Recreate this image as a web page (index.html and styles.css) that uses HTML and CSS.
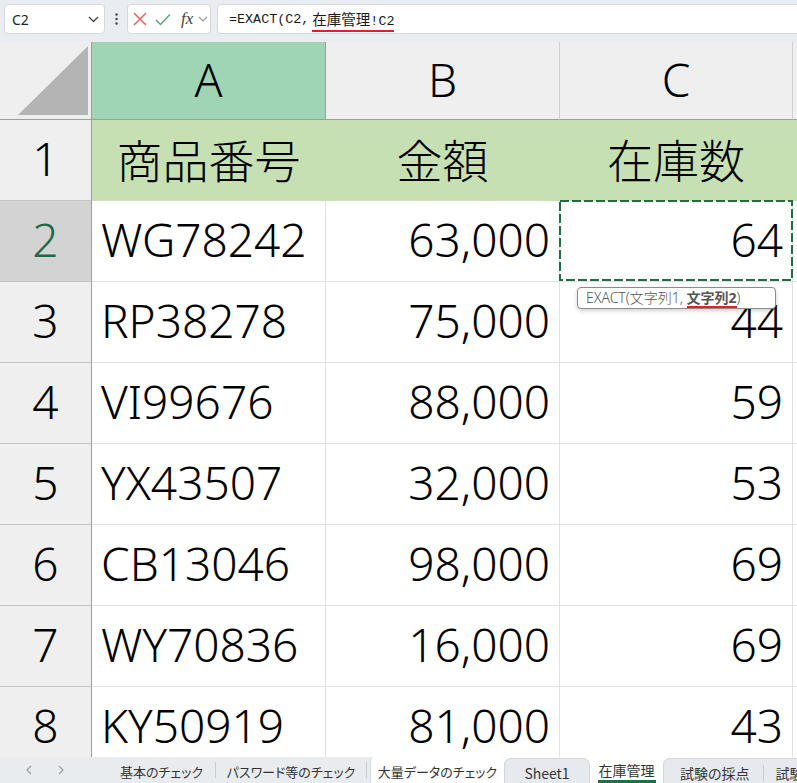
FILE: index.html
```html
<!DOCTYPE html>
<html lang="ja">
<head>
<meta charset="utf-8">
<title>在庫管理</title>
<link rel="stylesheet" href="styles.css">
</head>
<body>
<div class="app">
  <div class="fbar">
    <div class="namebox">
      <span>C2</span>
      <svg class="chev" width="11" height="7" viewBox="0 0 11 7"><path d="M1 1l4.5 4.5L10 1" fill="none" stroke="#444" stroke-width="1.3"/></svg>
    </div>
    <div class="dots">
      <svg width="3" height="12" viewBox="0 0 3 12"><circle cx="1.5" cy="1.5" r="1.2" fill="#444"/><circle cx="1.5" cy="6" r="1.2" fill="#444"/><circle cx="1.5" cy="10.5" r="1.2" fill="#444"/></svg>
    </div>
    <div class="fxbox">
      <svg class="ico-x" width="14" height="14" viewBox="0 0 14 14"><path d="M1 1l12 12M13 1L1 13" stroke="#e2625c" stroke-width="1.5" fill="none"/></svg>
      <svg class="ico-ok" width="16" height="13" viewBox="0 0 16 13"><path d="M1 7l4.5 4.5L15 1.5" stroke="#5aa872" stroke-width="1.5" fill="none"/></svg>
      <span class="fx">fx</span>
      <svg class="chev2" width="10" height="6" viewBox="0 0 10 6"><path d="M1 1l4 4 4-4" fill="none" stroke="#999" stroke-width="1.2"/></svg>
    </div>
    <div class="formula"><span class="flat">=EXACT(C2,</span><span class="fref"><span class="fk">在庫管理</span>!C2</span></div>
  </div>

  <div class="grid">
    <div class="corner"><svg width="91" height="77" viewBox="0 0 91 77"><path d="M18 73H88V4Z" fill="#b4b4b4"/></svg></div>
    <div class="ch hl">A</div>
    <div class="ch">B</div>
    <div class="ch">C</div>
    <div class="ch edge"></div>

    <div class="rh">1</div>
    <div class="c hd">商品番号</div>
    <div class="c hd">金額</div>
    <div class="c hd">在庫数</div>
    <div class="c hd edge"></div>

    <div class="rh sel">2</div>
    <div class="c l">WG78242</div>
    <div class="c r">63,000</div>
    <div class="c r active">64
      <svg class="marquee" width="234" height="81" viewBox="0 0 234 81"><rect x="1" y="1" width="232" height="79" fill="none" stroke="#1f6d42" stroke-width="2" stroke-dasharray="9 3"/></svg>
      <div class="tip">EXACT(文字列1, <b class="cur">文字列2</b>)</div>
    </div>
    <div class="c edge"></div>

    <div class="rh">3</div>
    <div class="c l">RP38278</div>
    <div class="c r">75,000</div>
    <div class="c r">44</div>
    <div class="c edge"></div>

    <div class="rh">4</div>
    <div class="c l">VI99676</div>
    <div class="c r">88,000</div>
    <div class="c r">59</div>
    <div class="c edge"></div>

    <div class="rh">5</div>
    <div class="c l">YX43507</div>
    <div class="c r">32,000</div>
    <div class="c r">53</div>
    <div class="c edge"></div>

    <div class="rh">6</div>
    <div class="c l">CB13046</div>
    <div class="c r">98,000</div>
    <div class="c r">69</div>
    <div class="c edge"></div>

    <div class="rh">7</div>
    <div class="c l">WY70836</div>
    <div class="c r">16,000</div>
    <div class="c r">69</div>
    <div class="c edge"></div>

    <div class="rh">8</div>
    <div class="c l">KY50919</div>
    <div class="c r">81,000</div>
    <div class="c r">43</div>
    <div class="c edge"></div>
  </div>

  <div class="tabs">
    <div class="nav">
      <svg width="6" height="10" viewBox="0 0 6 10"><path d="M5 1L1 5l4 4" fill="none" stroke="#9a9a9a" stroke-width="1.1"/></svg>
      <svg width="6" height="10" viewBox="0 0 6 10"><path d="M1 1l4 4-4 4" fill="none" stroke="#9a9a9a" stroke-width="1.1"/></svg>
    </div>
    <div class="tab t1">基本のチェック</div>
    <div class="sep"></div>
    <div class="tab t2">パスワード等のチェック</div>
    <div class="sep"></div>
    <div class="strip">
      <div class="tab t3">大量データのチェック</div>
      <div class="tab t4 pill">Sheet1</div>
      <div class="tab t5"><span class="cur-tab">在庫管理</span></div>
      <div class="tab t6 pill"><span class="pl">試験の採点</span><span class="sep2"></span><span class="pl">試験</span></div>
    </div>
  </div>
</div>
</body>
</html>
```

FILE: styles.css
```css
* { box-sizing: border-box; }
html, body { margin: 0; padding: 0; }
body {
  width: 797px;
  height: 783px;
  overflow: hidden;
  background: #fff;
  font-family: "Noto Sans", "Noto Sans CJK JP", sans-serif;
}
.app { display: flex; flex-direction: column; height: 783px; }

/* formula bar */
.fbar {
  height: 42px;
  flex: none;
  background: #e9edf1;
  display: flex;
  align-items: flex-start;
  padding: 4px 0 0 4px;
}
.namebox {
  width: 101px;
  height: 30px;
  background: #fff;
  border: 1px solid #d5d9dd;
  border-radius: 4px;
  display: flex;
  align-items: center;
  justify-content: space-between;
  padding: 0 5px 0 7px;
  font: 14px "Noto Sans", sans-serif;
  color: #222;
}
.dots { width: 22px; height: 30px; display: flex; align-items: center; justify-content: center; }
.fxbox {
  width: 84px;
  height: 30px;
  background: #fff;
  border: 1px solid #d5d9dd;
  border-radius: 4px;
  display: flex;
  align-items: center;
  padding-left: 5px;
}
.ico-ok { margin-left: 8px; }
.fx {
  margin-left: 10px;
  font: italic 17px "Liberation Serif", serif;
  color: #444;
  line-height: 1;
  margin-top: -2px;
}
.chev2 { margin-left: 5px; }
.formula {
  flex: 1;
  margin-left: 6px;
  margin-right: -10px;
  height: 30px;
  background: #fff;
  border: 1px solid #d5d9dd;
  border-radius: 4px;
  padding-left: 11px;
  display: flex;
  align-items: center;
  color: #1a1a1a;
  font: 13.4px "Liberation Mono", monospace;
}
.fref {
  margin-left: 3px;
  border-bottom: 2px solid #e0202c;
  line-height: 16px;
  margin-top: 2px;
}
.fk { font: 14.5px "Noto Sans CJK JP", sans-serif; }

/* grid */
.grid {
  flex: none;
  height: 715px;
  overflow: hidden;
  display: grid;
  grid-template-columns: 92px 234px 234px 233px 4px;
  grid-template-rows: 78px repeat(8, 81px);
  font-size: 46px;
  font-weight: 300;
  color: #000;
}
.grid > div { display: flex; align-items: center; padding-bottom: 4px; white-space: nowrap; }
.corner {
  background: #efefef;
  border-right: 1px solid #9e9e9e;
  border-bottom: 1px solid #9e9e9e;
  padding: 0 !important;
}
.ch {
  background: #efefef;
  justify-content: center;
  border-right: 1px solid #cfcfcf;
  border-bottom: 1px solid #9e9e9e;
}
.ch.hl { background: #9fd5b5; border-right-color: #9e9e9e; }
.rh {
  background: #efefef;
  justify-content: center;
  border-right: 1px solid #9e9e9e;
  border-bottom: 1px solid #c4c4c4;
}
.rh.sel { background: #d3d3d3; color: #1e6a44; }
.c {
  border-right: 1px solid #e1e1e1;
  border-bottom: 1px solid #e1e1e1;
}
.c.l { padding-left: 9px; }
.c.r { justify-content: flex-end; padding-right: 9px; }
.c.hd {
  background: #c6e0b4;
  border-color: #c6e0b4;
  justify-content: center;
  font-family: "Noto Sans CJK JP", sans-serif;
  font-weight: 300;
  font-size: 46px;
}
.c.edge { border-right: 0; }
.ch.edge { border-right: 0; }
.active { position: relative; z-index: 2; }
.marquee { position: absolute; left: -1px; top: -1px; }
.tip {
  position: absolute;
  left: 17px;
  top: 86px;
  width: 199px;
  height: 22px;
  background: #fff;
  border: 1px solid #8c8c8c;
  border-radius: 4px;
  box-shadow: 0 2px 4px rgba(0,0,0,0.18);
  font: 300 14px "Noto Sans", "Noto Sans CJK JP", sans-serif;
  color: #555;
  line-height: 20px;
  padding: 0 0 0 8px;
  white-space: nowrap;
  overflow: hidden;
}
.cur {
  font-weight: 700;
  color: #555;
  border-bottom: 2px solid #e0202c;
  line-height: 16px;
  display: inline-block;
}

/* sheet tabs */
.tabs {
  flex: 1;
  display: flex;
  background: #e9ecef;
  font: 13px "Noto Sans CJK JP", sans-serif;
  font-feature-settings: "palt";
  color: #333;
}
.nav {
  width: 108px;
  flex: none;
  display: flex;
  align-items: center;
  padding-left: 26px;
  gap: 26px;
}
.tab {
  flex: none;
  display: flex;
  align-items: center;
  justify-content: center;
  padding-top: 3px;
  white-space: nowrap;
}
.t1 { width: 107px; }
.t2 { width: 150px; }
.sep { width: 1px; height: 16px; background: #c9cdd1; align-self: center; flex: none; }
.strip {
  flex: 1;
  margin-left: 3px;
  display: flex;
  background: #fff;
  border-top-left-radius: 4px;
  border-left: 1px solid #d3d7db;
  overflow: hidden;
}
.t3 { width: 133px; }
.pill {
  background: #e6eaee;
  border: 1px solid #d2d6da;
  border-bottom: 0;
  border-radius: 7px 7px 0 0;
  margin-top: 1px;
}
.t4 { width: 86px; font-size: 14px; }
.t5 { width: 73px; align-items: stretch; font-size: 14px; }
.cur-tab {
  display: flex;
  align-items: center;
  border-bottom: 3px solid #1e7145;
  padding: 0 1px;
}
.t6 { flex: 1; justify-content: flex-start; padding-left: 16px; font-size: 14px; }
.sep2 { width: 1px; height: 16px; background: #c9cdd1; margin: 0 12px 0 13px; }
```
